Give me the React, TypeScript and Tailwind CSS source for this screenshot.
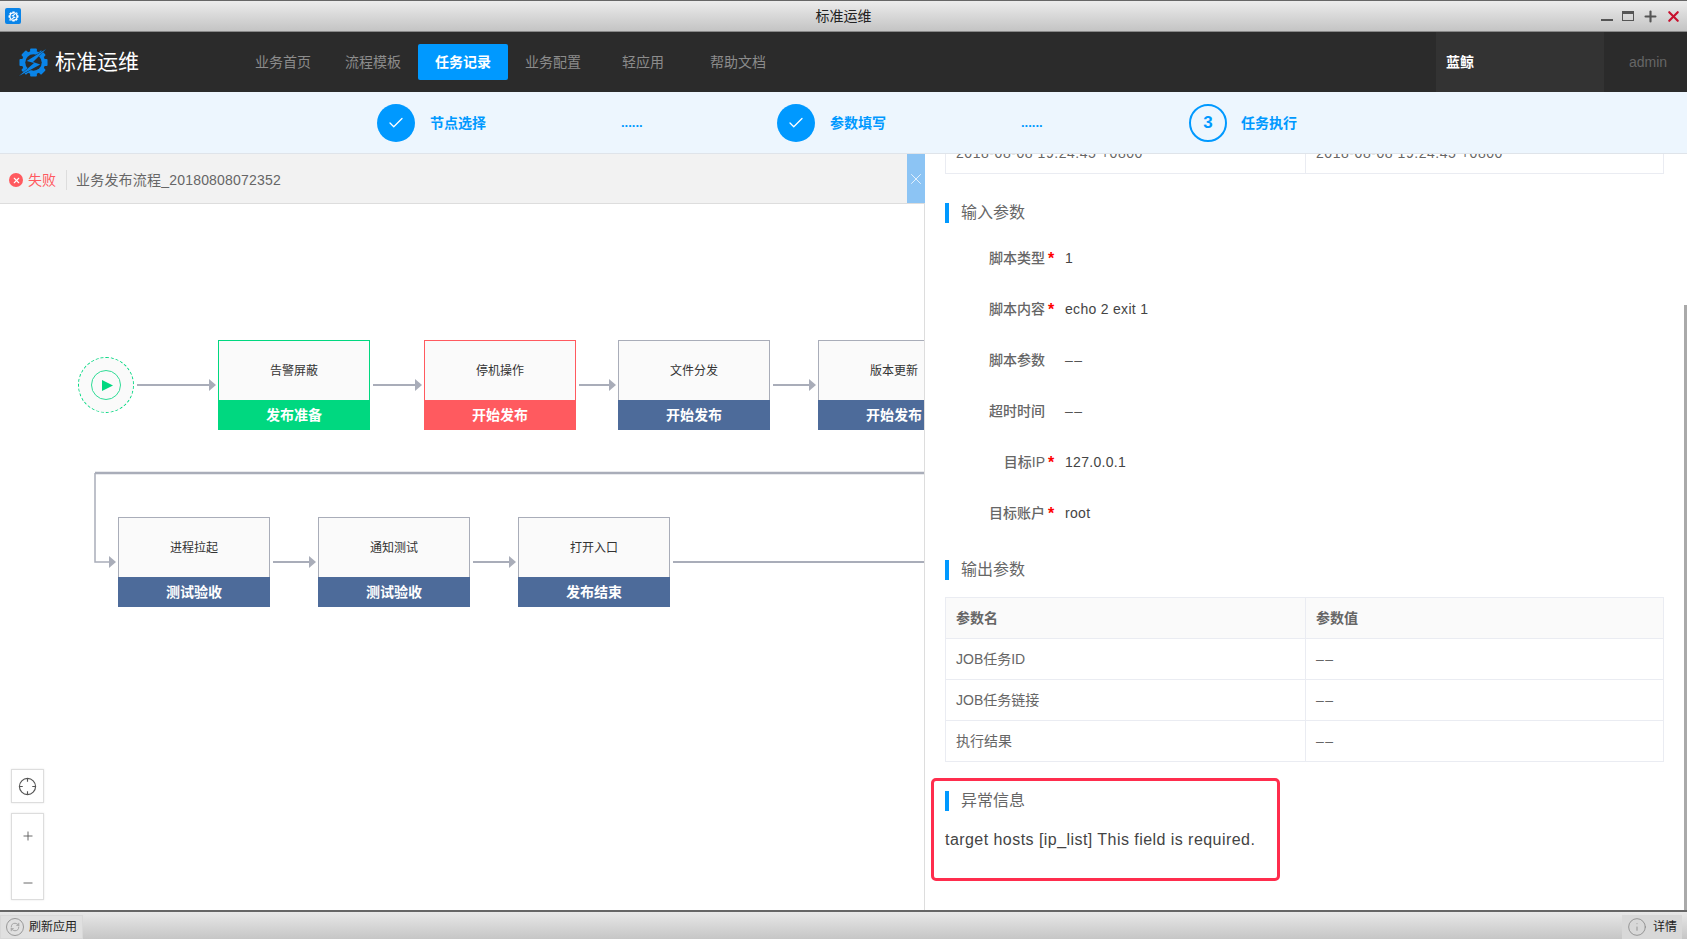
import { Check, Info, Minus, Plus, RefreshCw, X } from 'lucide-react';

const NODES = [
  { x: 218, y: 136, label: '告警屏蔽', footer: '发布准备', tone: 'green' },
  { x: 424, y: 136, label: '停机操作', footer: '开始发布', tone: 'red' },
  { x: 618, y: 136, label: '文件分发', footer: '开始发布', tone: 'blue' },
  { x: 818, y: 136, label: '版本更新', footer: '开始发布', tone: 'blue' },
  { x: 118, y: 313, label: '进程拉起', footer: '测试验收', tone: 'blue' },
  { x: 318, y: 313, label: '通知测试', footer: '测试验收', tone: 'blue' },
  { x: 518, y: 313, label: '打开入口', footer: '发布结束', tone: 'blue' },
];

const TONES: Record<string, { border: string; footer: string }> = {
  green: { border: 'border-[#00d880]', footer: 'bg-[#00d880]' },
  red: { border: 'border-[#ff5a5f]', footer: 'bg-[#ff5a5f]' },
  blue: { border: 'border-[#a9adb9]', footer: 'bg-[#4d6b9a]' },
};

const INPUTS = [
  { label: '脚本类型', required: true, value: '1' },
  { label: '脚本内容', required: true, value: 'echo 2 exit 1' },
  { label: '脚本参数', required: false, value: '––' },
  { label: '超时时间', required: false, value: '––' },
  { label: '目标IP', required: true, value: '127.0.0.1' },
  { label: '目标账户', required: true, value: 'root' },
];

const OUTPUTS = ['JOB任务ID', 'JOB任务链接', '执行结果'];

function Gear({ className, fill, cut }: { className: string; fill: string; cut: string }) {
  const teeth = [0, 45, 90, 135, 180, 225, 270, 315];
  return (
    <svg viewBox="0 0 32 32" className={className}>
      {teeth.map((a) => (
        <rect key={a} x="12.5" y="1.5" width="7" height="6" rx="1" fill={fill} transform={`rotate(${a} 16 16)`} />
      ))}
      <circle cx="16" cy="16" r="12" fill={fill} />
      <circle cx="16" cy="16" r="8.5" fill={cut} />
      <polygon
        points="29,2 9,14.5 16.5,16.5 1,30 23,18 15.5,15.5"
        fill={fill}
        stroke={cut}
        strokeWidth="1"
        paintOrder="stroke"
      />
    </svg>
  );
}

function SectionTitle({ children }: { children: string }) {
  return (
    <div className="flex h-5 items-center border-l-4 border-[#0099ff] pl-[12px] text-[16px] text-[#666]">
      {children}
    </div>
  );
}

function DoneStep({ label }: { label: string }) {
  return (
    <>
      <span className="flex h-[38px] w-[38px] items-center justify-center rounded-full bg-[#0099ff] text-white">
        <Check className="h-[18px] w-[18px]" strokeWidth={1.75} />
      </span>
      <span className="ml-[15px] w-[56px] pt-[1px] text-[14px] font-bold text-[#0099ff]">{label}</span>
    </>
  );
}

function FlowNode({ x, y, label, footer, tone }: (typeof NODES)[number]) {
  const t = TONES[tone];
  return (
    <div className="absolute h-[90px] w-[152px]" style={{ left: x, top: y }}>
      <div className={`flex h-[60px] items-center justify-center border border-b-0 bg-[#fafafa] text-[12px] text-[#333] ${t.border}`}>
        {label}
      </div>
      <div className={`flex h-[30px] items-center justify-center text-[14px] font-bold text-white ${t.footer}`}>
        {footer}
      </div>
    </div>
  );
}

function FlowCanvas() {
  return (
    <div className="relative flex-1 overflow-hidden bg-white">
      {/* connectors, page y minus 204 */}
      <svg className="absolute inset-0 h-full w-full">
        <g stroke="#a9adb9" fill="none">
          <path d="M137 181H211M373 181H417M579 181H611M773 181H811" strokeWidth="2" />
          <path d="M925 269H95" strokeWidth="2.5" />
          <path d="M95 269V358H111" strokeWidth="1.5" />
          <path d="M273 358H311M473 358H511M673 358H925" strokeWidth="2" />
        </g>
        <g fill="#a9adb9">
          <polygon points="209,175 216,181 209,187" />
          <polygon points="415,175 422,181 415,187" />
          <polygon points="609,175 616,181 609,187" />
          <polygon points="809,175 816,181 809,187" />
          <polygon points="109,352 116,358 109,364" />
          <polygon points="309,352 316,358 309,364" />
          <polygon points="509,352 516,358 509,364" />
        </g>
      </svg>

      <div className="absolute left-[78px] top-[153px] flex h-[56px] w-[56px] items-center justify-center rounded-full border border-dashed border-[#00d880] bg-[#fafafa]">
        <span className="flex h-[30px] w-[30px] items-center justify-center rounded-full border border-[#2fdc96]">
          <svg viewBox="0 0 10 10" className="ml-[2px] h-[11px] w-[11px]">
            <polygon points="0,0 10,5 0,10" fill="#00d880" />
          </svg>
        </span>
      </div>

      {NODES.map((n) => (
        <FlowNode key={n.label} {...n} />
      ))}

      <div className="absolute left-[11px] top-[565px] flex h-[34px] w-[33px] items-center justify-center border border-[#ddd] bg-white shadow-[0_0_2px_rgba(0,0,0,0.1)]">
        <svg viewBox="0 0 20 20" className="h-[19px] w-[19px]" fill="none" stroke="#555" strokeWidth="1.2">
          <circle cx="10" cy="10" r="8.5" />
          <path d="M10 1v4M10 15v4M1 10h4M15 10h4" />
        </svg>
      </div>
      <div className="absolute left-[11px] top-[609px] flex h-[87px] w-[33px] flex-col items-center justify-between border border-[#ddd] bg-white pb-[9px] pt-[15px] text-[#555] shadow-[0_0_2px_rgba(0,0,0,0.1)]">
        <Plus className="h-[14px] w-[14px]" strokeWidth={1.5} />
        <Minus className="h-[14px] w-[14px]" strokeWidth={1.5} />
      </div>
    </div>
  );
}

export default function App() {
  return (
    <div className="flex h-[939px] w-[1687px] flex-col overflow-hidden bg-white font-['Liberation_Sans','Noto_Sans_CJK_SC',sans-serif]">
      {/* Window title bar */}
      <div className="grid h-[32px] shrink-0 grid-cols-[1fr_auto_1fr] items-center border-y border-t-[#666] border-b-[#888] bg-gradient-to-b from-[#ececec] to-[#c4c4c4] pl-[5px] pr-[5px]">
        <span className="flex h-4 w-4 items-center justify-center rounded-[2px] bg-[#0a84e8]">
          <Gear className="h-[11px] w-[11px]" fill="#fff" cut="#0a84e8" />
        </span>
        <span className="text-[14px] text-[#222]">标准运维</span>
        <div className="flex items-center justify-end">
          <span className="mt-[7px] h-[2px] w-3 bg-[#555]" />
          <span className="ml-[9px] h-[10px] w-3 border border-t-[3px] border-[#555]" />
          <Plus className="ml-[8px] h-[17px] w-[17px] text-[#555]" strokeWidth={3} />
          <X className="ml-[6px] h-[17px] w-[17px] text-[#c8102e]" strokeWidth={3} />
        </div>
      </div>

      {/* Top nav */}
      <div className="flex h-[60px] shrink-0 items-center bg-[#2b2b2b]">
        <Gear className="ml-[18px] h-[31px] w-[31px]" fill="#0a84e8" cut="#2b2b2b" />
        <span className="ml-[6px] w-[83px] whitespace-nowrap text-[21px] text-white">标准运维</span>
        <nav className="ml-[100px] flex items-center text-[14px] text-[#8c8c8c]">
          <a className="px-[17px]">业务首页</a>
          <a className="px-[17px]">流程模板</a>
          <a className="flex h-9 items-center rounded-[2px] bg-[#0099ff] px-[17px] font-bold text-white">任务记录</a>
          <a className="px-[17px]">业务配置</a>
          <a className="ml-[7px] px-[17px]">轻应用</a>
          <a className="ml-[12px] px-[17px]">帮助文档</a>
        </nav>
        <div className="ml-auto flex h-full w-[168px] items-center bg-[#333] pl-[10px] text-[14px] font-bold text-white">蓝鲸</div>
        <div className="w-[83px] pl-[25px] text-[14px] text-[#666]">admin</div>
      </div>

      {/* Steps */}
      <div className="flex h-[62px] shrink-0 items-center border-b border-[#dfe4ea] bg-[#edf6fe] pl-[377px]">
        <DoneStep label="节点选择" />
        <span className="ml-[135px] w-[22px] text-[13px] font-bold text-[#0099ff]">......</span>
        <span className="ml-[134px] flex items-center">
          <DoneStep label="参数填写" />
        </span>
        <span className="ml-[135px] w-[22px] text-[13px] font-bold text-[#0099ff]">......</span>
        <span className="ml-[146px] flex h-[38px] w-[38px] items-center justify-center rounded-full border-2 border-[#0099ff] text-[17px] font-bold text-[#0099ff]">3</span>
        <span className="ml-[14px] pt-[1px] text-[14px] font-bold text-[#0099ff]">任务执行</span>
      </div>

      {/* Main */}
      <div className="flex min-h-0 flex-1">
        <div className="flex w-[924px] shrink-0 flex-col">
          <div className="flex h-[50px] shrink-0 items-center border-b border-[#ddd] bg-[#f2f2f2] pl-[9px]">
            <span className="mt-[3px] flex h-[14px] w-[14px] items-center justify-center rounded-full bg-[#ff5a5f] text-white">
              <X className="h-[9px] w-[9px]" strokeWidth={3} />
            </span>
            <span className="ml-[5px] mt-[3px] text-[14px] text-[#ff5a5f]">失败</span>
            <span className="ml-[10px] mt-[3px] h-[20px] w-px bg-[#ddd]" />
            <span className="ml-[9px] mt-[3px] text-[14px] tracking-[0.2px] text-[#666]">业务发布流程_20180808072352</span>
            <span className="relative z-10 -mr-px ml-auto flex h-full w-[18px] items-center justify-center bg-[#8cc4f4] text-white">
              <X className="h-[20px] w-[20px]" strokeWidth={1} />
            </span>
          </div>
          <FlowCanvas />
        </div>

        {/* Details, scrolled partway down */}
        <div className="relative min-w-0 flex-1 overflow-hidden border-l border-[#ddd] pl-[20px] pr-[23px]">
          <div className="absolute right-0 top-[151px] h-[606px] w-[3px] bg-[#aaa]" />
          <div className="-mt-[21px] flex h-[41px] items-center border border-t-0 border-[#eaecf2] text-[14px] tracking-[0.55px] text-[#666]">
            <span className="h-full w-[360px] border-r border-[#eaecf2] pl-[10px] leading-[41px]">2018-08-08 19:24:45 +0800</span>
            <span className="pl-[10px]">2018-08-08 19:24:45 +0800</span>
          </div>

          <div className="mt-[29px]">
            <SectionTitle>输入参数</SectionTitle>
          </div>
          <div className="mt-[10px]">
            {INPUTS.map((row) => (
              <div key={row.label} className="flex h-[51px] items-center text-[14px]">
                <span className="w-[100px] text-right font-medium text-[#666]">{row.label}</span>
                <span className="w-[20px] pl-[3px] text-[16px] font-bold text-[#ff0000]">{row.required ? '*' : ''}</span>
                <span className={row.value === '––' ? 'tracking-[1.5px] text-[#555]' : 'tracking-[0.3px] text-[#444]'}>{row.value}</span>
              </div>
            ))}
          </div>

          <div className="mt-[21px]">
            <SectionTitle>输出参数</SectionTitle>
          </div>
          <table className="mt-[17px] w-full table-fixed border-collapse text-[14px] text-[#666]">
            <thead>
              <tr className="h-[41px] bg-[#fafafa] font-medium">
                <th className="w-[360px] border border-[#eaecf2] pl-[10px] text-left font-bold">参数名</th>
                <th className="border border-[#eaecf2] pl-[10px] text-left font-bold">参数值</th>
              </tr>
            </thead>
            <tbody>
              {OUTPUTS.map((name) => (
                <tr key={name} className="h-[41px]">
                  <td className="border border-[#eaecf2] pl-[10px]">{name}</td>
                  <td className="border border-[#eaecf2] pl-[10px] tracking-[1.5px]">––</td>
                </tr>
              ))}
            </tbody>
          </table>

          <div className="-ml-[14px] mt-[16px] h-[103px] w-[349px] rounded-[5px] border-[3px] border-[#ff2d4d] pl-[11px] pt-[10px]">
            <SectionTitle>异常信息</SectionTitle>
            <p className="mt-[19px] whitespace-nowrap text-[16px] leading-5 tracking-[0.45px] text-[#444]">target hosts [ip_list] This field is required.</p>
          </div>
        </div>
      </div>

      {/* Status bar */}
      <div className="flex h-[29px] shrink-0 items-end justify-between border-t-2 border-[#666] bg-gradient-to-b from-[#e8e8e8] to-[#c6c6c6]">
        <div className="flex h-[24px] w-[83px] items-center border border-[#d8d8d8] bg-[#e0e0e0] pl-[5px] text-[12px] text-[#222]">
          <span className="flex h-[18px] w-[18px] items-center justify-center rounded-full border border-[#999] text-[#999]">
            <RefreshCw className="h-[10px] w-[10px]" />
          </span>
          <span className="ml-[5px]">刷新应用</span>
        </div>
        <div className="mr-[5px] flex h-[24px] w-[60px] items-center border border-[#d8d8d8] bg-[#d8d8d8] pl-[4px] text-[12px] text-[#222]">
          <Info className="h-[20px] w-[20px] text-[#888]" strokeWidth={1} />
          <span className="ml-[6px]">详情</span>
        </div>
      </div>
    </div>
  );
}
